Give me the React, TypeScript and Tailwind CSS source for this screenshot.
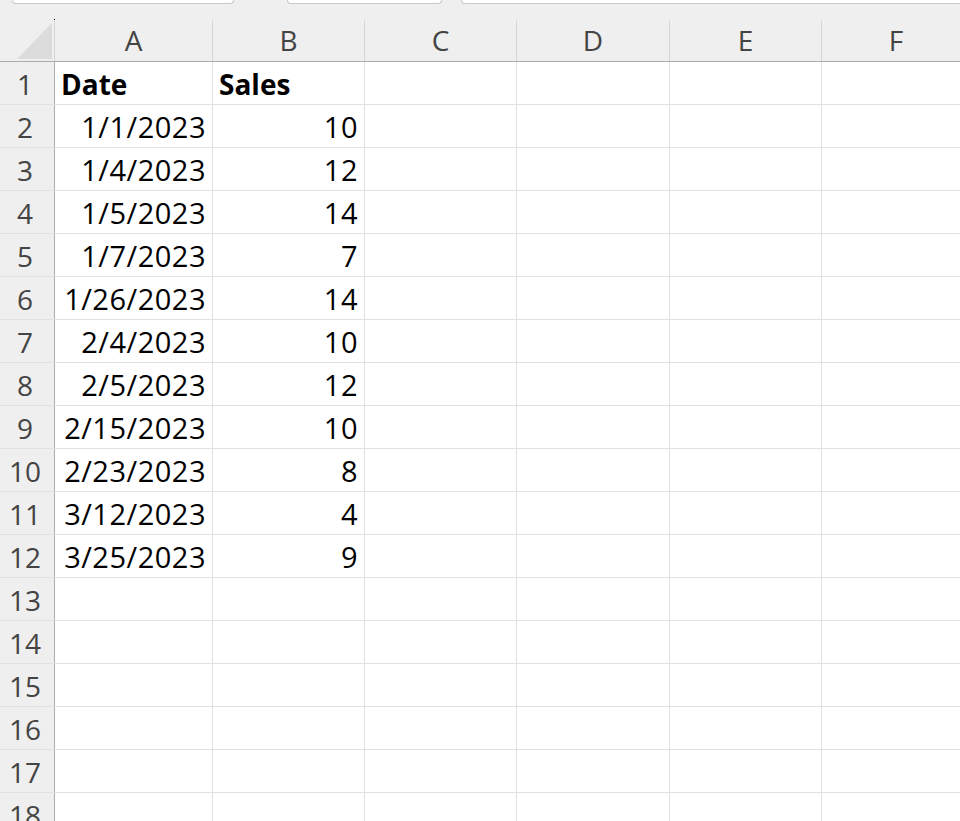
import React from 'react';

const columns = [
  { key: 'A', width: 'w-[158px]' },
  { key: 'B', width: 'w-[152px]' },
  { key: 'C', width: 'w-[152px]' },
  { key: 'D', width: 'w-[153px]' },
  { key: 'E', width: 'w-[152px]' },
];

const data: [string, string][] = [
  ['1/1/2023', '10'],
  ['1/4/2023', '12'],
  ['1/5/2023', '14'],
  ['1/7/2023', '7'],
  ['1/26/2023', '14'],
  ['2/4/2023', '10'],
  ['2/5/2023', '12'],
  ['2/15/2023', '10'],
  ['2/23/2023', '8'],
  ['3/12/2023', '4'],
  ['3/25/2023', '9'],
];

const font = { fontFamily: '"Open Sans", "Noto Sans", sans-serif' };

const Cell: React.FC<{ width?: string; align?: 'left' | 'right'; bold?: boolean; children?: React.ReactNode }> = ({ width, align = 'left', bold, children }) => (
  <div
    className={`${width ?? 'flex-1'} shrink-0 h-full border-r border-[#e1e1e1] flex items-end pb-[6px] leading-none text-black ${align === 'right' ? 'justify-end pr-[6px]' : 'justify-start pl-[6px]'} ${bold ? 'font-bold text-[28px]' : 'text-[29px] tracking-[0.5px]'}`}
  >
    {children}
  </div>
);

export default function App() {
  const rows = Array.from({ length: 18 }, (_, i) => i + 1);

  return (
    <div className="w-[960px] h-[821px] overflow-hidden bg-white" style={font}>
      {/* header area */}
      <div className="h-[62px] bg-[#efefef] border-b border-[#ababab] flex flex-col">
        <div className="h-[4px] flex items-start">
          <div className="ml-[12px] w-[222px] h-[4px] bg-white border border-t-0 border-[#c9c9c9] rounded-b-[5px]" />
          <div className="ml-[53px] w-[155px] h-[4px] bg-white border border-t-0 border-[#c9c9c9] rounded-b-[5px]" />
          <div className="ml-[19px] flex-1 h-[4px] bg-white border border-t-0 border-r-0 border-[#c9c9c9] rounded-bl-[5px]" />
        </div>
        <div className="flex-1 flex">
          <div className="w-[55px] shrink-0 relative flex flex-col">
            <div className="h-[16px]" />
            <div className="flex-1 border-r border-[#d6d6d6] relative">
              <span className="absolute right-[-1px] top-[-1px] w-[1px] h-[1px] bg-black" />
              <svg className="absolute left-[17px] top-[3px]" width="35" height="36" viewBox="0 0 35 36">
                <polygon points="0,36 35,36 35,0" fill="#dcdcdc" />
              </svg>
            </div>
          </div>
          {columns.map(c => (
            <div key={c.key} className={`${c.width} shrink-0 flex flex-col`}>
              <div className="h-[16px]" />
              <div className="flex-1 border-r border-[#d6d6d6] flex items-center justify-center text-[28px] leading-none text-[#444444] pb-[2px]">
                {c.key}
              </div>
            </div>
          ))}
          <div className="flex-1 flex items-center justify-center text-[28px] leading-none text-[#444444] pt-[16px] pb-[2px] pl-[10px]">
            F
          </div>
        </div>
      </div>

      {/* grid rows */}
      {rows.map(r => {
        const d = r >= 2 && r <= 12 ? data[r - 2] : null;
        return (
          <div key={r} className="h-[43px] flex border-b border-[#e1e1e1]">
            <div className="w-[55px] shrink-0 bg-[#efefef] border-r border-[#ababab] flex items-end justify-center pb-[6px] pr-[4px] text-[28px] leading-none text-[#444444]">
              {r}
            </div>
            <Cell width={columns[0].width} align={r === 1 ? 'left' : 'right'} bold={r === 1}>
              {r === 1 ? 'Date' : d ? d[0] : ''}
            </Cell>
            <Cell width={columns[1].width} align={r === 1 ? 'left' : 'right'} bold={r === 1}>
              {r === 1 ? 'Sales' : d ? d[1] : ''}
            </Cell>
            <Cell width={columns[2].width} />
            <Cell width={columns[3].width} />
            <Cell width={columns[4].width} />
            <div className="flex-1" />
          </div>
        );
      })}
    </div>
  );
}
